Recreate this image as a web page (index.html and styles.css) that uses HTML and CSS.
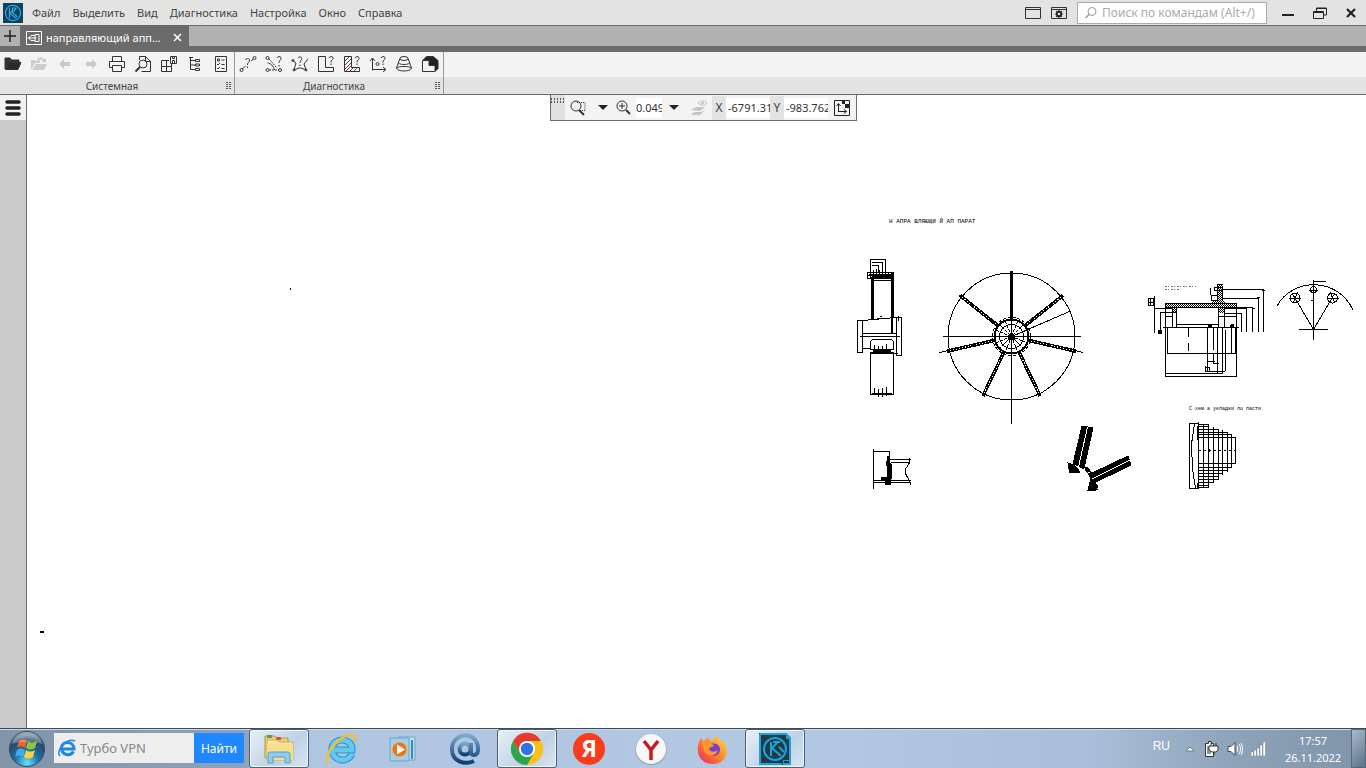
FILE: index.html
```
<!DOCTYPE html>
<html lang="ru">
<head>
    <meta charset="utf-8">
    <title>КОМПАС - направляющий аппарат</title>
    <link rel="stylesheet" href="styles.css">
</head>
<body>
    <header class="menubar">
        <svg class="app-logo" viewBox="0 0 20 20">
            <rect width="20" height="20" fill="#0b4260"/>
            <g fill="none" stroke="#35a6dc" stroke-width="1.2">
                <circle cx="10" cy="10" r="7.6"/>
                <path d="M6.5 5v10M13.500 5h-4v3M9.500 8l-3 2 7 5.500M13.500 5l-4 4.500 5 4.500"/>
            </g>
        </svg>
        <nav class="menu">
            <button>Файл</button>
            <button>Выделить</button>
            <button>Вид</button>
            <button>Диагностика</button>
            <button>Настройка</button>
            <button>Окно</button>
            <button>Справка</button>
        </nav>
        <div class="window-tools">
            <button aria-label="Панели">
                <svg width="16" height="14" viewBox="0 0 16 14"><path d="M.5 1.500h15v11H.5zM.5 3.500h15" fill="none" stroke="#333"/></svg>
            </button>
            <button aria-label="Параметры">
                <svg width="16" height="14" viewBox="0 0 16 14"><path d="M.5 1.500h15v11H.5zM.5 3.500h15" fill="none" stroke="#333"/><circle cx="8" cy="8" r="2.200" fill="none" stroke="#222" stroke-width="1.800"/><path d="M8 4v8M4 8h8M5.200 5.200l5.600 5.600M10.800 5.200l-5.600 5.600" stroke="#222" stroke-width="1.200"/><circle cx="8" cy="8" r="1.300" fill="#e3e3e3"/></svg>
            </button>
        </div>
        <label class="command-search">
            <svg width="14" height="14" viewBox="0 0 14 14" fill="none" stroke="#999"><circle cx="8" cy="5.500" r="4"/><path d="M5 8.500L1.500 12" stroke-width="1.500"/></svg>
            <input type="text" placeholder="Поиск по командам (Alt+/)" aria-label="Поиск по командам">
        </label>
        <div class="window-buttons">
            <button aria-label="Свернуть"><svg width="12" height="12" viewBox="0 0 12 12"><path d="M0 8h12" stroke="#222" stroke-width="2"/></svg></button>
            <button aria-label="Восстановить"><svg width="14" height="12" viewBox="0 0 14 12" fill="none" stroke="#222"><path d="M3.500 4V1h10v7h-3M.5 4.500h10v7H.5zM3 1.500h11M0 5.500h11"/></svg></button>
            <button aria-label="Закрыть"><svg width="10" height="10" viewBox="0 0 10 10"><path d="M1 1l8 8M9 1L1 9" stroke="#222" stroke-width="2.200"/></svg></button>
        </div>
    </header>

    <div class="tabs">
        <button class="tab-add" aria-label="Новый документ"><svg width="12" height="12" viewBox="0 0 12 12"><path d="M6 0v12M0 6h12" stroke="#222" stroke-width="1.500"/></svg></button>
        <div class="tab">
            <svg width="16" height="14" viewBox="0 0 16 14" fill="none" stroke="#fff"><path d="M.5 .5h15v13H.5zM9 3.500h4v7H9zM9 4.500H5L3.500 6v2L5 9.500h4M1.500 7h9"/></svg>
            <span>направляющий апп...</span>
            <button aria-label="Закрыть вкладку"><svg width="9" height="9" viewBox="0 0 9 9"><path d="M1 1l7 7M8 1L1 8" stroke="#fff" stroke-width="1.600"/></svg></button>
        </div>
    </div>

    <div class="toolbar">
        <section class="tool-group">
            <div class="tools">
                <button aria-label="Открыть"><svg viewBox="0 0 18 18"><path d="M1 14V3h5l1.500 2H15v2H5z" fill="#333"/><path d="M1.500 14.500L5 7.500h12l-3 7z" fill="#2b2b2b"/></svg></button>
                <button aria-label="Сохранить" disabled><svg viewBox="0 0 18 18"><path d="M1 15V5h4l1 1h4v2H5zM2 15l4-6h11l-3 6z" fill="#cdcdcd"/><path d="M7 6c0-4 4-5 7-2l2-1v4h-4l1-1c-2-2-4-1-4 0z" fill="#cdcdcd"/></svg></button>
                <button aria-label="Отменить" disabled><svg viewBox="0 0 18 18"><path d="M3 9l5-5v3h6v4H8v3z" fill="#c9c9c9"/></svg></button>
                <button aria-label="Повторить" disabled><svg viewBox="0 0 18 18"><path d="M15 9l-5-5v3H4v4h6v3z" fill="#c9c9c9"/></svg></button>
                <button aria-label="Печать"><svg viewBox="0 0 18 18"><path d="M4.500 6.500v-5h9v5M4.500 12.500h-3v-6h15v6h-3M4.500 10.500h9v6h-9z"/></svg></button>
                <button aria-label="Просмотр"><svg viewBox="0 0 18 18"><path d="M5.500 5V1.500h6l5 5v10h-9M11.500 1.500v5h5"/><circle cx="9" cy="9" r="4"/><path d="M6 12l-4.500 4.500" stroke-width="2"/></svg></button>
                <button aria-label="Сохранить фрагмент"><svg viewBox="0 0 18 18"><path d="M9 5.500H1.500v11h10V9M6.500 5.500v11M1.500 11.500h10M10.500 1.500h6v7h-6zM12.500 1.500v2h2v-2M12.500 8.500v-3h2v3"/></svg></button>
                <button aria-label="Дерево"><svg viewBox="0 0 18 18"><path d="M3 2.500h4M4.500 2.500v12H10M4.500 5.500H10M4.500 10H10M9.500 4.500h4v2h-4zM9.500 9h4v2h-4zM9.500 13.500h4v2h-4z"/></svg></button>
                <button aria-label="Свойства"><svg viewBox="0 0 18 18"><path d="M3.500 1.500h11v15h-11zM5.500 4h2v2h-2zM9.500 5h3M5 9l1 1 2-2M9.500 9.500h3M5 13l1 1 2-2M9.500 13.500h3"/></svg></button>
            </div>
            <footer>Системная<span class="grip"></span></footer>
        </section>
        <section class="tool-group">
            <div class="tools">
                <button aria-label="Расстояние"><svg viewBox="0 0 18 18"><circle cx="2.500" cy="15" r="1.500"/><circle cx="15.500" cy="3" r="1.500"/><path d="M3.500 14l3-3M12 6l2.500-2M6.500 5c1-2.500 5-1.500 4 1-.5 1-2 1.500-2 4M8.500 11.500V13"/></svg></button>
                <button aria-label="Угол"><svg viewBox="0 0 18 18"><circle cx="2.500" cy="3" r="1.500"/><circle cx="2.500" cy="15" r="1.500"/><circle cx="15" cy="15" r="1.500"/><path d="M4 15h9.500M4 4l8 9" stroke-dasharray="2 1"/><path d="M2.500 8c3 0 6 3 7 7M12 3c1-2.500 5-1.500 4 1-.5 1-2 1.500-2 4M14 10v1.500"/></svg></button>
                <button aria-label="Длина"><svg viewBox="0 0 18 18"><path d="M1 5l4 3-2 7 5-2h2l5 2-2-6 4-5M7 3c1-2 5-1 3.500 1.500-.5 1-1.500 1.500-1.500 3.500M9 9.500V11"/><circle cx="3" cy="15" r="1"/><circle cx="15" cy="15" r="1"/><circle cx="2" cy="5.500" r="1"/></svg></button>
                <button aria-label="Площадь"><svg viewBox="0 0 18 18"><path d="M8.500 1.500h-7v15h15v-4H8.500zM12 3c1-2.500 5-1.500 4 1-.5 1-2 1-2 3.500M14 8.500V10"/></svg></button>
                <button aria-label="Площадь штриховки"><svg viewBox="0 0 18 18"><path d="M8.500 1.500h-7v15h15v-4H8.500zM12 3c1-2.500 5-1.500 4 1-.5 1-2 1-2 3.500M14 8.500V10"/><path d="M2 6l4-4M2 10l6-6M2 14l6-6M3 16l6-6M7 16l3-3M11 16l3-3" stroke="#68405c"/></svg></button>
                <button aria-label="Координаты"><svg viewBox="0 0 18 18"><path d="M3.500 15.500v-12M1 6l2.500-3L6 6M3.500 14.500h13M14 12l3 2.500-3 2.500M12 3c1-2.500 5-1.500 4 1-.5 1-2 1-2 3.500M14 8.500V10"/><circle cx="8.500" cy="9" r="1.500"/></svg></button>
                <button aria-label="МЦХ тела"><svg viewBox="0 0 18 18"><ellipse cx="9" cy="3.500" rx="4" ry="2"/><path d="M5 3.500L1.500 13M13 3.500L16.500 13M3.500 8c2 2 9 2 11 0"/><path d="M1.500 13c1 4 14 4 15 0-2-2-13-2-15 0"/></svg></button>
                <button aria-label="Масса"><svg viewBox="0 0 18 18"><path d="M1.500 5.500l4-4h6l5 4v8l-3 3h-12z" fill="#f3f3f3"/><path d="M2 5.500l4-4h6l5 4v8l-3 3v-6H8v-5z" fill="#222"/></svg></button>
            </div>
            <footer>Диагностика<span class="grip"></span></footer>
        </section>
    </div>

    <main class="workspace">
        <aside class="sidebar">
            <button aria-label="Панель управления"><svg width="16" height="18" viewBox="0 0 16 18"><path d="M2 3h12M2 9h12M2 15h12" stroke="#222" stroke-width="3.500" stroke-linecap="round"/></svg></button>
        </aside>
        <div class="canvas">
            <svg class="drawing" viewBox="27 95 1339 633" preserveAspectRatio="xMinYMin meet">
                <defs>
                    <pattern id="hatch" width="2" height="2" patternUnits="userSpaceOnUse"><path d="M0 0h1v1H0zM1 1h1v1H1z" fill="#000" stroke="none"/></pattern>
                    <g id="spoke"><path d="M0-16v-50" stroke-width="3.500"/><path d="M0-20v-44" stroke="#fff" stroke-dasharray="1 2"/></g>
                </defs>
                <path d="M290 288.500h1M40 632h4" stroke-width="2"/>
                <text x="889" y="223">Н АПРА ВЛЯЮЩИ Й АП ПАРАТ</text>
                <text x="1189" y="410" class="small">С хем а укладки ло пасти</text>

                <!-- side view -->
                <path d="M870.500 272v-12.500h15V272M872 262.500h10V272M872 265.500h6V272M857.500 320.500h5v32h-5zM896.500 317.500h5v38h-5zM862.500 320.500L896 317.500M862.500 333.500h34M860 336.500h40M862.500 348.500h8M893.500 353.500h4M874 280.500h17M870.500 341.500l2-2h19l2 2v8h-23zM870.500 353.500h23v41h-23zM870 352.500h24"/>
                <path d="M867.500 272.500h26v6h-26zM870.500 272v6M873.500 270v8M876.500 269v9M879.500 270v8M882.500 269v9M885.500 271v7M888.500 272v6M868 275.500h26M874.500 345v6M878.500 346v5M882.500 346v5M886.500 344v7M874.500 388v7M878.500 389v8M882.500 388v9M886.500 387v9M880 316.500h2M877 318.500h2M898.500 316v5"/>
                <path d="M872 277v42M892 273v44M872 277h20" stroke-width="3"/>
                <path d="M891.500 316v17M873 351h18M872 394h20M869 275h23" stroke-width="2"/>

                <!-- front view -->
                <g transform="translate(1011.500 336.500)">
                    <circle r="63.500"/>
                    <circle r="17" stroke-width="2"/>
                    <circle r="19" stroke-dasharray="3 2"/>
                    <circle r="12"/>
                    <path d="M-69 0H69M0-66V87M0 0l58-25M-72 16l18-4M72 16l-18-4M-52-41l8 6M52-41l-8 6"/>
                    <path d="M-12-12L12 12M12-12L-12 12M-6-15L6 15M6-15L-6 15M-15-6L15 6M-15 6L15-6" stroke-dasharray="3 1"/>
                    <circle r="3" fill="#000"/>
                    <path d="M0-16v-50" stroke-width="3"/>
                    <use href="#spoke" transform="rotate(51.430)"/>
                    <use href="#spoke" transform="rotate(102.860)"/>
                    <use href="#spoke" transform="rotate(154.290)"/>
                    <use href="#spoke" transform="rotate(205.710)"/>
                    <use href="#spoke" transform="rotate(257.140)"/>
                    <use href="#spoke" transform="rotate(308.570)"/>
                </g>

                <!-- hub section -->
                <path d="M1165 303h47v-3h5v-15h6v15l3 3h11v5h-13v5h-6v-5h-42v5h-4v-5h-7z" fill="url(#hatch)" stroke="none"/>
                <path d="M1165.500 303.500h71v73h-71zM1165.500 307.500h71M1172.500 307v20M1176.500 307v20M1218.500 307v20M1224.500 307v20M1165.500 312.500h11M1165.500 316.500h7M1218.500 316.500h18M1176.500 324.500h42M1163 327.500h76M1167.500 327.500h69v26h-69zM1165.500 373.500h57"/>
                <path d="M1188.500 328v9M1188.500 343v8M1207.500 327v44M1213.500 353v10h5M1217.500 286v15M1222.500 286v15M1217.500 327v46M1222.500 327v46M1225.500 330v41M1231.500 328v26M1235.500 328v26M1213.500 328v22M1207 361.500h8M1205 371.500h20M1205.500 367v4h4v-3z"/>
                <path d="M1217 284.500h6M1214.500 287.500h8v3h-8zM1210.500 288v7M1211.500 295.500h6v5h-6zM1222 289.500h41.500V332M1222 298.500h36.500V332M1236 307.500h16.500V332M1224 308.500h22.500V332M1224 313.500h17.500V332"/>
                <path d="M1154.500 296v37M1160.500 312v21M1154.500 308.500h18M1160.500 312.500h5M1148.500 298.500h5v7h-5zM1150.500 298v8M1148.500 302.500h5M1257 297.500h3M1262 290.500h3M1252 308.500h3"/>
                <g fill="#000"><circle cx="1160" cy="332" r="2"/><circle cx="1210" cy="326" r="2"/><circle cx="1232" cy="326" r="1.500"/></g>
                <path d="M1165 286.500h31M1165 289.500h14" stroke="#777" stroke-dasharray="2 1 1 2"/>

                <!-- flange sector -->
                <path d="M1277 306C1292 278 1337 276 1353 310M1313.500 280v60M1299 329.500h29M1313.500 281.500h12M1313.500 329.500L1292 293M1313.500 329.500L1335 293M1289 298.500h12M1327 298.500h12M1309 290.500h9M1298 292l-5 11M1330 292l5 11M1311 300.500h3"/>
                <circle cx="1295" cy="298" r="5"/><circle cx="1332.500" cy="298" r="5"/><circle cx="1313.500" cy="289.500" r="3"/>

                <!-- rim detail -->
                <path d="M873.500 449v40M873.500 451.500h16v6M890 459.500h21M891 462.500h19M873 480.500h38M873 482.500h38M909 458c4 4-4 9-4 13s5 9 6 14"/>
                <path d="M887 456h3v6l2 3v13l-2 2h-9v-3h6v-11h-1zM885 481h6v4h-6z" fill="#000" stroke="none"/>

                <!-- blade mounting -->
                <path d="M1082 426l11 2-9 40-11-4zM1128 456l3 9-37 18-4-9zM1068 463l6 2 6 7-10 1zM1091 478l7 8-2 4h-8z" fill="#000"/>
                <path d="M1080 466c7 1 14 10 13 19" stroke-width="4" stroke-dasharray="5 1"/>
                <path d="M1087.500 427l-9 40M1130 460l-38 19" stroke="#fff"/>
                <path d="M1068.500 463v6M1084 466l7 6M1089 489.500h9"/>

                <!-- layup scheme -->
                <path d="M1189.500 423.500h9v65h-9zM1194.500 424l-3 20 1 25 3 19M1198.500 422v67M1203.500 424v64M1208.500 424v63M1213.500 427v55M1218.500 429v51M1222.500 430v45M1227.500 432v40M1231.500 434v34M1235.500 437v27"/>
                <path d="M1198.500 424.500h10M1198.500 426.500h10M1198.500 429.500h20M1198.500 432.500h29M1198.500 434.500h33M1198.500 437.500h37M1198.500 463.500h37M1198.500 467.500h33M1198.500 470.500h29M1198.500 473.500h24M1198.500 476.500h20M1198.500 479.500h20M1198.500 482.500h15M1198.500 485.500h10M1198.500 487.500h10"/>
                <path d="M1199 450.500h37" stroke-dasharray="2 3"/>
                <path d="M1198 426v14M1209 449v3M1198 483v6" stroke-width="2"/>
            </svg>

            <div class="view-bar">
                <span class="bar-grip"></span>
                <button class="zoom-area" aria-label="Показать рамкой"><svg width="18" height="18" viewBox="0 0 18 18" fill="none" stroke="#333"><circle cx="7" cy="7" r="5"/><path d="M10 11l5 5" stroke-width="2"/><path d="M8 3.500h8v8h-5" stroke-dasharray="1 1"/></svg></button>
                <button class="drop" aria-label="Варианты показа"></button>
                <button class="zoom-in" aria-label="Увеличить"><svg width="18" height="18" viewBox="0 0 18 18" fill="none" stroke="#333"><circle cx="7" cy="7" r="5"/><path d="M4 7h6M7 4v6"/><path d="M11 11l4 4" stroke-width="2"/></svg></button>
                <input class="scale" type="text" value="0.0493" aria-label="Масштаб">
                <button class="drop" aria-label="Список масштабов"></button>
                <button class="layers" aria-label="Слои" disabled><svg width="18" height="18" viewBox="0 0 18 18" fill="#c4c4c4"><path d="M1 11l5-3h9l-5 4zM1 15l4-2h6l4-2-5 5H3z"/><path d="M8 4c3-3 6-3 9 0-3 3-6 3-9 0z" fill="none" stroke="#c4c4c4"/><circle cx="12.500" cy="4" r="1.500"/></svg></button>
                <label for="coord-x">X</label>
                <input id="coord-x" type="text" value="-6791.310">
                <label for="coord-y">Y</label>
                <input id="coord-y" type="text" value="-983.7620">
                <button class="origin" aria-label="Система координат"><svg width="16" height="16" viewBox="0 0 16 16" fill="none" stroke="#222"><path d="M.5 .5h15v15H.5zM4.500 12V4M2.500 6l2-2.500 2 2.500M4.500 11.500h8M10 9.500l2.500 2-2.500 2"/><path d="M8 1h3v3H8zM11 4h4v4h-4z" fill="#222" stroke="none"/></svg></button>
            </div>
        </div>
    </main>

    <footer class="taskbar">
        <button class="start" aria-label="Пуск">
            <svg width="38" height="38" viewBox="0 0 38 38">
                <defs>
                    <radialGradient id="orb" cx=".5" cy=".9" r=".9"><stop offset="0" stop-color="#6fe3ff"/><stop offset=".4" stop-color="#1c6ca8"/><stop offset=".75" stop-color="#2b4a66"/><stop offset="1" stop-color="#b5c7d6"/></radialGradient>
                </defs>
                <circle cx="19" cy="19" r="17.500" fill="url(#orb)" stroke="#34495d"/>
                <path d="M11 11c3-2 5-2 8 0l-2 7c-3-2-5-2-8 0z" fill="#f0622d"/>
                <path d="M20 11c3 2 5 2 9 0l-2 7c-3 2-6 2-9 0z" fill="#8cc83c"/>
                <path d="M9 20c3-2 5-2 8 0l-2 7c-3-2-5-2-8 0z" fill="#42aee6"/>
                <path d="M18 20c3 2 5 2 9 0l-2 7c-3 2-6 2-9 0z" fill="#fbd13c"/>
                <path d="M4 14C8 1 30 1 34 14c-9-3-21-3-30 0z" fill="#fff" opacity=".25"/>
            </svg>
        </button>
        <form class="web-search">
            <svg width="20" height="20" viewBox="0 0 20 20" fill="none"><path d="M16.500 13.500c-3 5-12 4-12-3.500 0-7 12-8 12.500 1H5" stroke="#1e88e5" stroke-width="3"/><path d="M3 18C-2 13 10-1 18 3" stroke="#1e88e5" stroke-width="1.500"/></svg>
            <input type="text" value="Турбо VPN" aria-label="Поиск в интернете">
            <button type="button">Найти</button>
        </form>
        <div class="apps">
            <button class="active" aria-label="Проводник"><svg width="34" height="34" viewBox="0 0 34 34"><path d="M3 4h10l2 2h11v20H3z" fill="#e9cf73" stroke="#b79a45"/><path d="M5 3h5v3H5z" fill="#57a25b"/><path d="M14 5h5v3h-5z" fill="#c45c3d"/><path d="M5 8h10l2 2h14v18H5z" fill="#f7e6a0" stroke="#ccb05c"/><path d="M5 12h26v16H5z" fill="#f5df8c"/><path d="M6 31V22q0-2 2-2h18q2 0 2 2v9h-5v-6H11v6z" fill="#8fcdf0" stroke="#5a9cc4"/></svg></button>
            <button aria-label="Internet Explorer"><svg width="34" height="34" viewBox="0 0 34 34" fill="none"><path d="M28 22c-5 10-20 7-20-5S29 5 28 18H9" stroke="#2c8fc5" stroke-width="7"/><path d="M28 22c-5 10-20 7-20-5S29 5 28 18H9" stroke="#62c9f3" stroke-width="5"/><path d="M4 31C-2 24 18-2 30 4c2 1 1 4 0 6" stroke="#efc12f" stroke-width="2.500"/></svg></button>
            <button aria-label="Проигрыватель"><svg width="30" height="30" viewBox="0 0 30 30"><path d="M10 3h17v23H10z" fill="#b9dff2" stroke="#6aa9c9"/><path d="M24 6v19" stroke="#3f88b2" stroke-width="2"/><path d="M2 4h19v23H2z" fill="#9fd0ea" stroke="#6ba4c5"/><circle cx="11.500" cy="15.500" r="7.500" fill="#e87524" stroke="#f7b87d"/><path d="M9 10.500v10l8-5z" fill="#fff"/></svg></button>
            <button aria-label="Почта"><svg width="34" height="34" viewBox="0 0 34 34" fill="none"><defs><linearGradient id="mail" x1="0" y1="0" x2="0" y2="1"><stop offset="0" stop-color="#7ba8cf"/><stop offset="1" stop-color="#0d3f78"/></linearGradient></defs><g stroke="url(#mail)" stroke-width="4"><circle cx="17" cy="17" r="5.500"/><path d="M23 11v9c0 5 8 4 7-4C29-2 4 0 4 17c0 13 13 16 22 12"/></g></svg></button>
            <button class="active" aria-label="Chrome"><svg width="34" height="34" viewBox="0 0 34 34"><circle cx="17" cy="17" r="16" fill="#fbc116"/><path d="M17 9h14A16 16 0 0 0 3.100 9l7 12z" fill="#e33b2e"/><path d="M3.100 9A16 16 0 0 0 17 33l7-12-7 4-7-4z" fill="#2da44e"/><circle cx="17" cy="17" r="8" fill="#fff"/><circle cx="17" cy="17" r="6.200" fill="#2e73e8"/></svg></button>
            <button aria-label="Яндекс"><svg width="34" height="34" viewBox="0 0 34 34"><circle cx="17" cy="17" r="16" fill="#fb3c1c"/><text x="17" y="25" class="ya-letter">Я</text></svg></button>
            <button aria-label="Яндекс Браузер"><svg width="34" height="34" viewBox="0 0 34 34"><circle cx="17" cy="17.500" r="15.500" fill="#8899ae"/><circle cx="17" cy="17" r="15" fill="#f8f8f8"/><path d="M10 9l7 9 7-9M17 17v11" fill="none" stroke="#c8191f" stroke-width="3.500"/></svg></button>
            <button aria-label="Firefox"><svg width="34" height="34" viewBox="0 0 34 34"><defs><linearGradient id="fox" x1="1" y1="0" x2="0" y2="1"><stop offset="0" stop-color="#ffe44a"/><stop offset=".5" stop-color="#ff8526"/><stop offset="1" stop-color="#f01f68"/></linearGradient></defs><path d="M3 10l2-4 2 3 3-1 1-3 4 4c2 0 4-1 4-6 3 2 5 4 6 7l2-2c8 13 2 24-10 24S-1 22 3 10z" fill="url(#fox)"/><path d="M10 16c1-5 13-7 14 1 0 10-13 8-14-1z" fill="#7340d1"/><path d="M6 10c6-1 7 1 12 3-1 3-4 1-5 4 2 4 7 3 9 1-1 7-13 7-14 0z" fill="#ff972c"/></svg></button>
            <button class="active" aria-label="КОМПАС"><svg width="34" height="34" viewBox="0 0 34 34"><path d="M1 1h27l5 5v27H1z" fill="#243943"/><g fill="none" stroke="#18a5db" stroke-width="2"><path d="M2 2h26l4 4v22M2 2v30h22"/><circle cx="17" cy="17" r="11"/><path d="M13 10v14M22 10h-7l5 0-6 6 9 8M21 15l5 5"/></g><path d="M28 1l5 5v1h-5zM25 28h8v5h-8z" fill="#18a5db"/><path d="M26 30h5" stroke="#102c3a" stroke-width="2"/></svg></button>
        </div>
        <div class="tray">
            <button class="lang">RU</button>
            <button aria-label="Скрытые значки"><svg width="10" height="8" viewBox="0 0 10 8"><path d="M1 6l4-4 4 4z" fill="#fff" stroke="#6d7d8e"/></svg></button>
            <button aria-label="Питание"><svg width="16" height="18" viewBox="0 0 16 18"><path d="M2.500 3.500h3v-2h3v2h2v13h-8z" fill="#fff" stroke="#333"/><path d="M4 6h4v8H4z" fill="#8795a5"/><path d="M6 6h9v4l-2 2H9l-3-2zM8 6V3M13 6V3M11 12v3" fill="#fff" stroke="#333"/></svg></button>
            <button aria-label="Громкость"><svg width="16" height="16" viewBox="0 0 16 16"><path d="M1 5.500h3l4-4v13l-4-4H1z" fill="#fff" stroke="#445"/><path d="M10 5c1 2 1 4 0 6M12 3c2 3 2 7 0 10M14 2c2 4 2 8 0 12" fill="none" stroke="#fff"/></svg></button>
            <button aria-label="Сеть"><svg width="16" height="14" viewBox="0 0 16 14"><path d="M0 10h2.500v4H0zM3 8h2.500v6H3zM6 6h2.500v8H6zM9 3h2.500v11H9zM12 0h2.500v14H12z" fill="#fff" stroke="#566" stroke-width=".4"/></svg></button>
            <time class="clock"><span>17:57</span><span>26.11.2022</span></time>
            <button class="show-desktop" aria-label="Свернуть все окна"></button>
        </div>
    </footer>
</body>
</html>
```
FILE: styles.css
```
* {
    margin: 0;
    padding: 0;
    box-sizing: border-box;
}

body {
    height: 100vh;
    display: flex;
    flex-direction: column;
    overflow: hidden;
    background: #fff;
    color: #444;
    font-family: "Noto Sans", "Open Sans", sans-serif;
    font-size: 12px;
}

button, input {
    font: inherit;
    color: inherit;
    border: none;
    background: none;
    outline: none;
    min-width: 0;
}

button {
    display: flex;
    align-items: center;
    justify-content: center;
}

svg {
    display: block;
    flex: none;
}

/* top menu */
.menubar {
    height: 26px;
    display: flex;
    align-items: center;
    background: #e3e3e3;
    border-bottom: 1px solid #6b6b6b;
    flex: none;
}

.app-logo {
    width: 20px;
    height: 20px;
    margin-left: 3px;
}

.menu {
    display: flex;
    gap: 12px;
    margin-left: 9px;
    flex: 1;
    font-size: 11px;
}

.window-tools {
    display: flex;
    gap: 10px;
    margin-right: 10px;
}

.command-search {
    width: 190px;
    height: 22px;
    display: flex;
    align-items: center;
    gap: 4px;
    padding-left: 6px;
    background: #fff;
    border: 1px solid #aaa;
}

.command-search input {
    flex: 1;
}

.command-search input::placeholder {
    color: #aaa;
    opacity: 1;
}

.window-buttons {
    display: flex;
    align-items: center;
    gap: 19px;
    padding: 0 10px 0 15px;
}

/* document tabs */
.tabs {
    height: 26px;
    display: flex;
    background: #b1b1b1;
    border-bottom: 6px solid #6b6b6b;
    flex: none;
}

.tab-add {
    width: 20px;
}

.tab {
    display: flex;
    align-items: center;
    width: 169px;
    height: 23px;
    padding: 0 7px 0 6px;
    background: #6b6b6b;
    color: #fff;
    font-size: 11px;
}

.tab span {
    flex: 1;
    margin-left: 4px;
    white-space: nowrap;
}

/* tool groups */
.toolbar {
    display: flex;
    height: 43px;
    background: linear-gradient(#f3f3f3 25px, #e3e3e3 25px);
    border-bottom: 1px solid #6b6b6b;
    flex: none;
}

.tool-group {
    border-right: 1px solid #999;
}

.tools {
    display: flex;
    height: 25px;
}

.tools button {
    width: 26px;
    height: 24px;
}

.tools svg {
    width: 18px;
    height: 18px;
    fill: none;
    stroke: #333;
}

.tools button:disabled svg {
    stroke: none;
}

.tool-group footer {
    position: relative;
    height: 17px;
    padding-right: 10px;
    font-size: 10px;
    line-height: 18px;
    text-align: center;
}

.grip {
    position: absolute;
    right: 3px;
    top: 5px;
    width: 5px;
    height: 8px;
    background: repeating-linear-gradient(#555 0 1px, transparent 1px 2px);
    mask: linear-gradient(90deg, #000 2px, transparent 2px 3px, #000 3px);
}

/* workspace */
.workspace {
    display: flex;
    flex: 1;
    min-height: 0;
}

.sidebar {
    width: 27px;
    background: #cbcbcb;
    border-right: 1px solid #6b6b6b;
}

.sidebar button {
    width: 26px;
    height: 25px;
    background: #f2f2f2;
}

.canvas {
    position: relative;
    flex: 1;
}

.drawing {
    width: 100%;
    height: 100%;
    fill: none;
    stroke: #000;
    shape-rendering: crispEdges;
}

.drawing text {
    font-family: "Liberation Mono", monospace;
    font-size: 6px;
    fill: #000;
    stroke: none;
}

.drawing .small {
    font-size: 5px;
}

.view-bar {
    position: absolute;
    top: 0;
    left: 523px;
    height: 26px;
    display: flex;
    align-items: center;
    background: #f3f3f3;
    border: 1px solid #6b6b6b;
    border-top: none;
}

.bar-grip {
    align-self: stretch;
    width: 14px;
    background: repeating-linear-gradient(90deg, transparent 0 1px, #e1e1e1 1px 3px), linear-gradient(#e1e1e1 3px, #555 3px 5px, #e1e1e1 5px 6px, #555 6px 8px, #e1e1e1 8px);
}

.view-bar input {
    width: 44px;
    height: 20px;
    padding-left: 2px;
    background: #fff;
    font-size: 11px;
    color: #333;
}

.view-bar .scale {
    width: 26px;
    padding: 0;
}

.view-bar label {
    width: 14px;
    height: 24px;
    line-height: 24px;
    text-align: center;
    background: #e3e3e3;
}

.drop {
    width: 24px;
    height: 24px;
}

.drop::before {
    content: "";
    border: 5px solid transparent;
    border-top-color: #222;
    border-bottom: none;
}

.zoom-area {
    width: 26px;
}

.zoom-in {
    width: 21px;
    padding-right: 3px;
}

.layers {
    width: 26px;
}

.origin {
    width: 28px;
}

/* taskbar */
.taskbar {
    height: 40px;
    display: flex;
    align-items: stretch;
    border-top: 1px solid #3d4a5a;
    background: linear-gradient(90deg, #8194a8 0, #8da2b8 240px, #b0c5df 310px, #b2c8e3 60%, #a9bfd9 80%, #8fa4ba 90%, #7f93a9 100%);
    box-shadow: inset 0 1px #ccd9e8;
    flex: none;
}

.start {
    width: 54px;
}

.web-search {
    display: flex;
    align-items: center;
    width: 190px;
    height: 30px;
    margin: 4px 5px 0 0;
    padding-left: 3px;
    background: #eee;
    font-size: 13px;
}

.web-search input {
    flex: 1;
    margin-left: 3px;
    color: #888;
}

.web-search button {
    width: 50px;
    height: 30px;
    background: #1f87ff;
    color: #fff;
    font-size: 12px;
}

.apps {
    display: flex;
    gap: 2px;
    flex: 1;
}

.apps button {
    width: 60px;
}

.apps .active {
    background: linear-gradient(135deg, #e8f0f8, #bfd1e5 60%, #d8e5f2);
    border: 1px solid #4c5f75;
    border-radius: 3px;
    box-shadow: inset 0 0 0 1px #eef5fb;
}

.ya-letter {
    font-size: 23px;
    font-weight: bold;
    fill: #fff;
    text-anchor: middle;
}

.tray {
    display: flex;
    align-items: center;
    gap: 8px;
    color: #fff;
}

.lang {
    margin: 0 7px 6px 0;
    font-family: "Liberation Sans", sans-serif;
}

.clock {
    display: flex;
    flex-direction: column;
    align-items: center;
    width: 64px;
    margin-left: 6px;
    line-height: 17px;
    font-size: 11px;
}

.show-desktop {
    align-self: stretch;
    width: 15px;
    margin-left: -2px;
    background: linear-gradient(135deg, #a9b9ca, #5d7187);
    border: 1px solid #55677b;
}
```
